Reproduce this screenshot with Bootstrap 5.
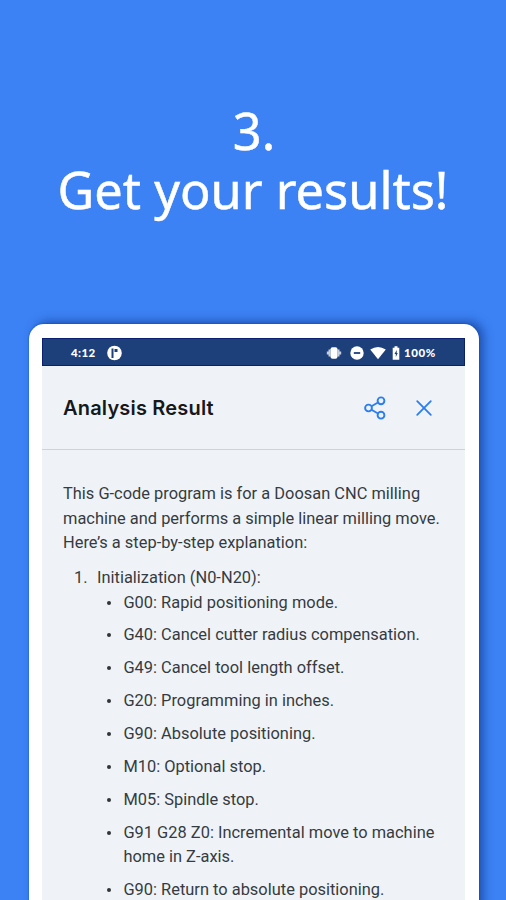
<!DOCTYPE html>
<html lang="en">
<head>
<meta charset="utf-8">
<meta name="viewport" content="width=device-width, initial-scale=1">
<title>Analysis Result</title>
<link href="https://cdn.jsdelivr.net/npm/bootstrap@5.3.0/dist/css/bootstrap.min.css" rel="stylesheet">
<style>
body{background:#3c82f5;font-family:Roboto,"Liberation Sans",sans-serif}
.screen{height:900px}
.promo{height:324px;padding-top:101px;font:400 50.500px/59px "Noto Sans","Open Sans",sans-serif}
.promo span{white-space:nowrap;-webkit-text-stroke:.5px #fff}
.promo .step{padding-left:2px}
.device{width:450px;height:620px;margin-left:29px;padding:14px 14px 0 13px;border-radius:15px 15px 0 0;box-shadow:5px -3px 10px rgba(5,40,120,.5),0 0 2px #0d50bd}
.status{height:28px;background:#1d3f7a;border:1px solid #0b1f70;padding:2px 28px 0 28px;font:900 11.500px/24px Lato,sans-serif}
.clock{letter-spacing:.4px}
.app-mark{margin-left:10px}
.status-icons svg{flex:none}
.dnd{margin-left:8px}
.wifi{margin-left:6px}
.batt{margin-left:6px}
.pct{margin-left:4px;letter-spacing:.65px}
.view{background:#eff3f7;height:578px}
.topbar{height:84px;border-bottom:1px solid #ced3d9;padding:0 29px 0 21px}
.topbar h1{font:600 20px/28px Inter,sans-serif;color:#15181c;letter-spacing:.18px}
.actions{gap:26px}
.result{padding:32px 0 0 21px;font-size:16.4px;line-height:24.65px;letter-spacing:.015px;color:#363b41}
.result p{margin-bottom:10px}
.steps>li,.codes>li{display:flex}
.num{width:34px;padding-left:11px;flex:none}
.codes>li{margin-bottom:8.2px}
.codes>li::before{content:"";width:4px;height:4px;margin:10px 12px 0 0;border-radius:50%;background:#30353a;flex:none}
.codes{padding-left:10.400px}
</style>
</head>
<body>
<main class="screen overflow-hidden">
  <header class="promo text-white text-center d-flex flex-column align-items-center">
    <span class="step">3.</span>
    <span>Get your results!</span>
  </header>
  <section class="device bg-white">
    <div class="status text-white d-flex align-items-center">
      <span class="clock">4:12</span>
      <svg class="app-mark" width="16" height="16" viewBox="0 0 16 16"><circle cx="8.500" cy="8" r="7.300" fill="#fff"/><path d="M5.500 3.500h2V13h-2zM8.500 4h3v3h-3z" fill="#1d3f7a"/></svg>
      <div class="status-icons ms-auto d-flex align-items-center">
        <svg width="16" height="14" viewBox="0 0 16 14" fill="#fff"><rect x="4.500" y="1.200" width="7" height="11.600" rx="2"/><path d="M2.500 3.500h2v7h-2zM11.500 3.500h2v7h-2zM.8 5.500h1.700v3H.8zM13.500 5.500h1.700v3h-1.700z" opacity=".75"/></svg>
        <svg class="dnd" width="14" height="14" viewBox="0 0 14 14"><circle cx="7" cy="7" r="6.700" fill="#fff"/><path d="M3.800 7h6.400" stroke="#1d3f7a" stroke-width="1.800"/></svg>
        <svg class="wifi" width="16" height="14" viewBox="0 0 16 14"><path d="M.2 3.500Q8-1.500 15.800 3.500L8 13.300z" fill="#fff"/></svg>
        <svg class="batt" width="8" height="14" viewBox="0 0 8 14"><path d="M2.500.2h3v1.500h1.800v12H.7v-12h1.800z" fill="#fff"/><path d="M4.700 4 2.500 8h1.300v3l2-4H4.700z" fill="#1d3f7a"/></svg>
        <span class="pct">100%</span>
      </div>
    </div>
    <div class="view">
      <div class="topbar d-flex align-items-center justify-content-between">
        <h1 class="m-0">Analysis Result</h1>
        <div class="actions d-flex align-items-center">
          <svg width="22" height="24" viewBox="0 0 22 24" fill="none" stroke="#2b7df0" stroke-width="1.900"><circle cx="4.500" cy="12" r="3.400"/><circle cx="17" cy="4.800" r="3.400"/><circle cx="17" cy="19.200" r="3.400"/><path d="m7.500 10.300 6.500-3.800M7.500 13.700l6.500 3.800"/></svg>
          <svg width="24" height="24" viewBox="0 0 24 24" stroke="#2b7df0" stroke-width="1.800" stroke-linecap="round"><path d="m5.200 5.200 13.600 13.600m0-13.600-13.600 13.600"/></svg>
        </div>
      </div>
      <article class="result">
        <p>This G-code program is for a Doosan CNC milling<br>machine and performs a simple linear milling move.<br>Here’s a step-by-step explanation:</p>
        <ol class="steps list-unstyled m-0">
          <li><span class="num">1.</span>
            <div>Initialization (N0-N20):
              <ul class="codes list-unstyled">
                <li>G00: Rapid positioning mode.</li>
                <li>G40: Cancel cutter radius compensation.</li>
                <li>G49: Cancel tool length offset.</li>
                <li>G20: Programming in inches.</li>
                <li>G90: Absolute positioning.</li>
                <li>M10: Optional stop.</li>
                <li>M05: Spindle stop.</li>
                <li>G91 G28 Z0: Incremental move to machine<br>home in Z-axis.</li>
                <li>G90: Return to absolute positioning.</li>
              </ul>
            </div>
          </li>
        </ol>
      </article>
    </div>
  </section>
</main>
<script src="https://cdn.jsdelivr.net/npm/bootstrap@5.3.0/dist/js/bootstrap.bundle.min.js"></script>
</body>
</html>
